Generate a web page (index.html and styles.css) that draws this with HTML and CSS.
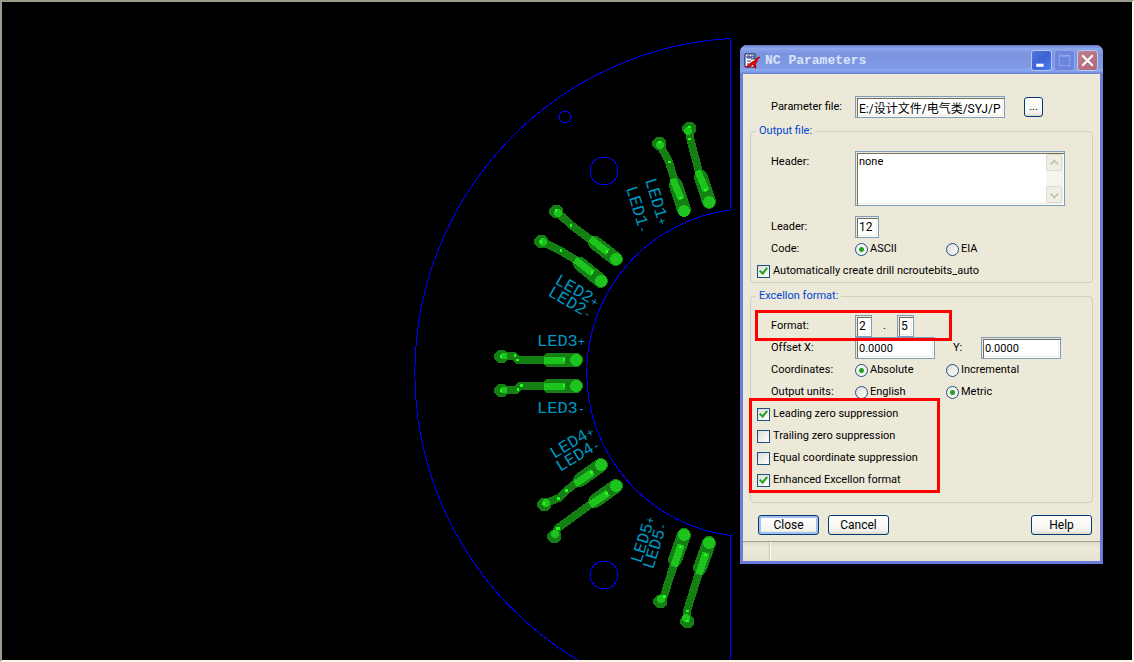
FILE: index.html
```
<!DOCTYPE html>
<html lang="en">
<head>
    <meta charset="UTF-8">
    <meta name="viewport" content="width=device-width, initial-scale=1.0">
    <title>NC Parameters</title>
    <link rel="stylesheet" href="styles.css">
</head>
<body>
    <main class="workspace">
        <!-- Board drawing -->
        <svg class="board" role="img" aria-label="LED ring board">
            <g class="outline">
                <path d="M728.5 208V36.5A334.8 334.8 0 0 0 728.5 705V533.5A164 164 0 0 1 728.5 208"/>
                <circle cx="563" cy="115" r="6"/>
                <circle cx="602" cy="169" r="14"/>
                <circle cx="602" cy="573" r="14"/>
            </g>
            <g transform="translate(-2 -2)">
                <g class="track">
                    <path d="M659 143L669 162L677 188"/>
                    <path d="M689 128L690 138L700 176"/>
                    <path d="M556 211L571 225L595 243"/>
                    <path d="M541 241L561 251L579 262"/>
                    <path d="M501 356H514L518 360H548"/>
                    <path d="M501 390H516L520 386H548"/>
                    <path d="M544 504L559 498L567 490L580 480"/>
                    <path d="M554 536L558 528L595 501"/>
                    <path d="M660 601L664 596L675 561"/>
                    <path d="M687 621L687 611L700 569"/>
                </g>
                <g class="pad">
                    <path d="M676 185L684 210"/>
                    <path d="M701 177L709 202"/>
                    <path d="M595 243L616 259"/>
                    <path d="M580 264L601 281"/>
                    <path d="M549 360H576"/>
                    <path d="M549 386H576"/>
                    <path d="M580 480L601 465"/>
                    <path d="M595 501L616 486"/>
                    <path d="M675 560L684 535"/>
                    <path d="M700 568L709 543"/>
                </g>
                <g class="via">
                    <path d="M656 137h6l4 4v5l-4 4h-6l-4-4v-5z"/>
                    <path d="M686 122h6l4 4v5l-4 4h-6l-4-4v-5z"/>
                    <path d="M553 205h6l4 4v5l-4 4h-6l-4-4v-5z"/>
                    <path d="M538 235h6l4 4v5l-4 4h-6l-4-4v-5z"/>
                    <path d="M498 350h6l4 4v5l-4 4h-6l-4-4v-5z"/>
                    <path d="M498 384h6l4 4v5l-4 4h-6l-4-4v-5z"/>
                    <path d="M541 498h6l4 4v5l-4 4h-6l-4-4v-5z"/>
                    <path d="M551 530h6l4 4v5l-4 4h-6l-4-4v-5z"/>
                    <path d="M657 595h6l4 4v5l-4 4h-6l-4-4v-5z"/>
                    <path d="M684 615h6l4 4v5l-4 4h-6l-4-4v-5z"/>
                </g>
                <g class="slot">
                    <path d="M674 182L680 196"/>
                    <path d="M699 174L705 188"/>
                    <path d="M593 241L605 250"/>
                    <path d="M578 262L590 271"/>
                    <path d="M547 360H561"/>
                    <path d="M547 386H561"/>
                    <path d="M578 482L590 474"/>
                    <path d="M593 503L605 495"/>
                    <path d="M675 563L680 548"/>
                    <path d="M700 571L705 556"/>
                </g>
                <g class="hole">
                    <circle cx="684" cy="211" r="6"/>
                    <circle cx="709" cy="202" r="6"/>
                    <circle cx="616" cy="259" r="6"/>
                    <circle cx="601" cy="281" r="6"/>
                    <circle cx="576" cy="360" r="6"/>
                    <circle cx="576" cy="386" r="6"/>
                    <circle cx="601" cy="465" r="6"/>
                    <circle cx="616" cy="486" r="6"/>
                    <circle cx="684" cy="535" r="6"/>
                    <circle cx="709" cy="543" r="6"/>
                    <circle cx="660" cy="145" r="4"/>
                    <circle cx="688" cy="131" r="4"/>
                    <circle cx="558" cy="213" r="4"/>
                    <circle cx="543" cy="242" r="4"/>
                    <path d="M501 353h6v6h-6zM501 387h6v6h-6z"/>
                    <circle cx="546" cy="503" r="4"/>
                    <circle cx="555" cy="534" r="4"/>
                    <circle cx="661" cy="599" r="4"/>
                    <circle cx="686" cy="618" r="4"/>
                </g>
                <g class="node">
                    <path d="M658 141h3v2h-3zM668 161h3v2h-3zM679 197h3v2h-3zM688 126h3v2h-3zM688 138h3v2h-3zM704 189h3v2h-3z"/>
                    <path d="M555 209h2v3h-2zM570 224h2v3h-2zM606 250h2v3h-2zM540 240h2v3h-2zM560 249h2v3h-2zM591 271h2v3h-2z"/>
                    <path d="M500 355h2v3h-2zM514 354h2v3h-2zM516 359h3v2h-3zM563 358h2v3h-2zM500 389h2v3h-2zM517 388h2v3h-2zM520 384h3v3h-3zM563 384h2v3h-2z"/>
                    <path d="M557 497h3v3h-3zM565 489h3v3h-3zM590 471h3v3h-3zM556 527h4v3h-4zM605 492h3v3h-3zM543 502h2v3h-2z"/>
                    <path d="M663 595h3v3h-3zM679 546h3v2h-3zM686 610h3v2h-3zM704 554h3v2h-3zM686 620h3v2h-3z"/>
                </g>
                <g class="silk">
                    <text transform="translate(645 180) rotate(73)">LED1<tspan class="sign">+</tspan></text>
                    <text transform="translate(626 188) rotate(73)">LED1<tspan class="sign">-</tspan></text>
                    <text transform="translate(554 283) rotate(30)">LED2<tspan class="sign">+</tspan></text>
                    <text transform="translate(547 295) rotate(30)">LED2<tspan class="sign">-</tspan></text>
                    <text x="537" y="346">LED3<tspan class="sign">+</tspan></text>
                    <text x="537" y="413">LED3<tspan class="sign">-</tspan></text>
                    <text transform="translate(554 459) rotate(-31)">LED4<tspan class="sign">+</tspan></text>
                    <text transform="translate(560 472) rotate(-31)">LED4<tspan class="sign">-</tspan></text>
                    <text transform="translate(641 564) rotate(-73)">LED5<tspan class="sign">+</tspan></text>
                    <text transform="translate(653 570) rotate(-73)">LED5<tspan class="sign">-</tspan></text>
                </g>
            </g>
        </svg>

        <!-- Dialog window -->
        <section class="dialog" aria-labelledby="dialogTitle">
            <header class="titlebar">
                <svg class="app-icon" viewBox="0 0 16 16" aria-hidden="true">
                    <path d="M1 1h10v13H1z" fill="#fff" stroke="#101850"/>
                    <path d="M3 3h3v2H3zM7 3h3v3H7zM3 8h4M3 11h3" fill="#aab8e8" stroke="#303a80"/>
                    <path d="M16 4l-3 1-2 3-3 1-6 5h3l3-2 1-1 2 4h1l-1-4 2-2V7z" fill="#e01010" stroke="#c00000"/>
                </svg>
                <h1 id="dialogTitle">NC Parameters</h1>
                <button type="button" class="caption" aria-label="Minimize">
                    <svg viewBox="0 0 18 18"><path d="M4 12h7v3H4z" fill="#fff"/></svg>
                </button>
                <button type="button" class="caption caption-max" aria-label="Maximize" disabled>
                    <svg viewBox="0 0 18 18"><path d="M4 4h10v10H4zM4 5h10" fill="none" stroke="#8fa4ea"/></svg>
                </button>
                <button type="button" class="caption caption-close" aria-label="Close window">
                    <svg viewBox="0 0 18 18"><path d="M4 4l10 10M14 4L4 14" stroke="#fff" stroke-width="2"/></svg>
                </button>
            </header>

            <form class="content">
                <div class="row param-row">
                    <label for="paramFile">Parameter file:</label>
                    <input type="text" id="paramFile" class="path" value="E:/设计文件/电气类/SYJ/PCB">
                    <button type="button" class="browse">...</button>
                </div>

                <fieldset>
                    <legend>Output file:</legend>
                    <div class="row header-row">
                        <label for="header">Header:</label>
                        <div class="memo">
                            <textarea id="header">none</textarea>
                            <div class="scroll">
                                <button type="button" aria-label="Scroll up" disabled>
                                    <svg viewBox="0 0 15 15"><path d="M4 9l4-4 4 4"/></svg>
                                </button>
                                <button type="button" aria-label="Scroll down" disabled>
                                    <svg viewBox="0 0 15 15"><path d="M4 6l4 4 4-4"/></svg>
                                </button>
                            </div>
                        </div>
                    </div>
                    <div class="row">
                        <label for="leader">Leader:</label>
                        <input type="text" id="leader" class="short" value="12">
                    </div>
                    <div class="row">
                        <span>Code:</span>
                        <label class="option"><input type="radio" name="code" checked>ASCII</label>
                        <label class="option"><input type="radio" name="code">EIA</label>
                    </div>
                    <label class="option check-row"><input type="checkbox" checked>Automatically create drill ncroutebits_auto</label>
                </fieldset>

                <fieldset class="excellon">
                    <legend>Excellon format:</legend>
                    <div class="row marked marked-format">
                        <label for="intDigits">Format:</label>
                        <div class="digits">
                            <input type="text" id="intDigits" value="2">
                            <span>.</span>
                            <input type="text" value="5" aria-label="Decimal digits">
                        </div>
                    </div>
                    <div class="row">
                        <label for="offsetX">Offset X:</label>
                        <input type="text" id="offsetX" class="number" value="0.0000">
                        <div class="offset-y">
                            <label for="offsetY">Y:</label>
                            <input type="text" id="offsetY" class="number" value="0.0000">
                        </div>
                    </div>
                    <div class="row">
                        <span>Coordinates:</span>
                        <label class="option"><input type="radio" name="coords" checked>Absolute</label>
                        <label class="option"><input type="radio" name="coords">Incremental</label>
                    </div>
                    <div class="row">
                        <span>Output units:</span>
                        <label class="option"><input type="radio" name="units">English</label>
                        <label class="option"><input type="radio" name="units" checked>Metric</label>
                    </div>
                    <div class="marked marked-checks">
                        <label class="option check-row"><input type="checkbox" checked>Leading zero suppression</label>
                        <label class="option check-row"><input type="checkbox">Trailing zero suppression</label>
                        <label class="option check-row"><input type="checkbox">Equal coordinate suppression</label>
                        <label class="option check-row"><input type="checkbox" checked>Enhanced Excellon format</label>
                    </div>
                </fieldset>

                <div class="buttons">
                    <button type="button" class="button default">Close</button>
                    <button type="button" class="button">Cancel</button>
                    <button type="button" class="button help">Help</button>
                </div>
            </form>
            <footer class="statusbar"></footer>
        </section>
    </main>
</body>
</html>
```
FILE: styles.css
```
*, *::before, *::after {
    box-sizing: border-box;
}
body {
    margin: 0;
    font-family: Roboto, "Noto Sans CJK SC", sans-serif;
    font-size: 11px;
    line-height: 14px;
    color: #000;
    background-color: #000;
}
.workspace {
    position: relative;
    min-height: 100vh;
    border: 2px solid #fff8e8;
    border-top-color: #9c9a8a;
    border-left-color: #9c9a8a;
    overflow: hidden;
}

/* board */
.board {
    position: absolute;
    inset: 0;
    width: 100%;
    height: 100%;
    shape-rendering: crispEdges;
}
.outline {
    fill: none;
    stroke: #0000ff;
    stroke-width: 1;
}
.track, .pad, .slot {
    fill: none;
    stroke: #148014;
    stroke-linejoin: round;
    stroke-linecap: round;
}
.track {
    stroke-width: 8;
}
.pad {
    stroke-width: 14;
}
.via {
    fill: #148014;
}
.slot {
    stroke: #1ec41e;
    stroke-width: 7;
    stroke-linecap: square;
}
.hole {
    fill: #1ec41e;
}
.node {
    fill: #20ff20;
}
.silk {
    fill: #0098c0;
    font-family: "Liberation Mono", monospace;
    font-size: 17px;
}
.silk .sign {
    font-size: 12px;
}

/* dialog */
.dialog {
    position: absolute;
    top: 43px;
    left: 738px;
    width: 363px;
    border: 3px solid #6c7cd8;
    border-top: 0;
    border-radius: 7px 7px 0 0;
    background-color: #ece9d8;
}
.titlebar {
    display: flex;
    align-items: center;
    gap: 2px;
    height: 29px;
    margin: 0 -3px;
    padding: 2px 5px 0 4px;
    border-radius: 7px 7px 0 0;
    background: linear-gradient(#6277c8, #8ea6ec 12%, #7b93df 30%, #809ae6 75%, #86a8f0 88%, #7080cc);
}
.titlebar h1 {
    flex: 1;
    margin: 0;
    padding-left: 3px;
    font-family: "Liberation Mono", monospace;
    font-size: 13px;
    line-height: 16px;
    font-weight: bold;
    color: #d8e4f8;
}
.app-icon {
    width: 16px;
    height: 16px;
}
.caption {
    width: 21px;
    height: 21px;
    padding: 0;
    border: 1px solid #b8c8f4;
    border-radius: 3px;
    background: linear-gradient(135deg, #4f78e0, #3c62d4 50%, #4880f0);
}
.caption svg {
    display: block;
    width: 100%;
}
.caption-max {
    border-color: #8fa4ea;
    background: #6c86de;
}
.caption-close {
    background: linear-gradient(135deg, #c08090, #b06878);
}
.content {
    padding: 22px 7px 6px;
}
.row {
    display: grid;
    grid-template-columns: 84px 91px 1fr;
    align-items: center;
    height: 22px;
    padding-left: 20px;
}
.param-row {
    grid-template-columns: 84px 150px 1fr;
    margin: 0 0 6px 1px;
}
fieldset {
    min-width: 0;
    margin: 0 0 6px;
    padding: 13px 0 0;
    border: 1px solid #d0d0bf;
    border-radius: 4px;
}
legend {
    margin-left: 5px;
    padding: 0 3px;
    color: #0046d5;
}
.excellon {
    margin-bottom: 12px;
    padding: 12px 0 11px;
}
.header-row {
    grid-template-columns: 84px 210px;
    align-items: start;
    height: 55px;
    margin-bottom: 10px;
}
.header-row label {
    padding-top: 4px;
}

/* controls */
input, textarea, button {
    font: inherit;
    color: inherit;
}
input[type="text"], .memo {
    border: 1px solid #7f9db9;
    background-color: #fff;
    box-shadow: inset 1px 1px #ece9d8, inset 2px 2px #716f64, inset -1px -1px #fff, inset -2px -2px #f1efe2;
}
input[type="text"] {
    width: 100%;
    height: 22px;
    padding: 0 3px;
    border-radius: 0;
    font-size: 12px;
}
input.short {
    width: 24px;
}
input.number {
    width: 80px;
    font-size: 11px;
}
.digits {
    display: grid;
    grid-template-columns: 17px 25px 17px;
    align-items: center;
    text-align: center;
}
.offset-y {
    display: grid;
    grid-template-columns: 28px 80px;
    align-items: center;
    padding-left: 7px;
}
.memo {
    display: flex;
    height: 55px;
    padding: 2px;
}
.memo textarea {
    flex: 1;
    min-width: 0;
    padding: 0 1px;
    border: 0;
    outline: 0;
    resize: none;
    overflow: hidden;
    background: transparent;
    line-height: 16px;
}
.scroll {
    display: flex;
    flex-direction: column;
    justify-content: space-between;
    width: 16px;
    background-color: #f6f5f0;
}
.scroll button {
    width: 16px;
    height: 17px;
    padding: 0;
    border: 1px solid #dddac8;
    border-radius: 2px;
    background-color: #f0efe6;
}
.scroll svg {
    display: block;
    fill: none;
    stroke: #c4c2b4;
    stroke-width: 2;
}
.option {
    display: flex;
    align-items: center;
    gap: 2px;
    white-space: nowrap;
}
.check-row {
    gap: 3px;
    height: 22px;
    padding-left: 6px;
}
input[type="radio"], input[type="checkbox"] {
    appearance: none;
    flex: none;
    width: 13px;
    height: 13px;
    margin: 0;
    border: 1px solid #1c5180;
    background: linear-gradient(135deg, #dcdcd7, #fff);
}
input[type="radio"] {
    border-radius: 50%;
}
input[type="radio"]:checked {
    background: radial-gradient(circle, #21a121 2px, #f4f4f2 3px);
}
input[type="checkbox"]:checked::before {
    content: "";
    display: block;
    width: 5px;
    height: 8px;
    margin-left: 3px;
    border: solid #21a121;
    border-width: 0 2px 2px 0;
    transform: rotate(40deg);
}
.button, .browse {
    padding: 0;
    border: 1px solid #003c74;
    border-radius: 3px;
    background: linear-gradient(#fff, #f4f3ee 80%, #dcd8cc);
}
.browse {
    width: 19px;
    height: 20px;
    margin-left: 19px;
}
.buttons {
    display: flex;
    gap: 9px;
    padding: 0 1px 0 8px;
}
.button {
    width: 61px;
    height: 20px;
    font-size: 12px;
}
.default {
    box-shadow: inset 0 0 0 2px #a4c0f0;
}
.help {
    margin-left: auto;
}
.statusbar {
    height: 20px;
    border-top: 1px solid #a09e90;
    background: linear-gradient(90deg, transparent 26px, #c8c4b0 26px, #c8c4b0 27px, #fff 27px, #fff 28px, transparent 28px), linear-gradient(#dedbc8, #ece9d8 30%, #e6e3d0);
}

/* red callouts */
.marked {
    position: relative;
}
.marked::after {
    content: "";
    position: absolute;
    border: 3px solid #ff0000;
    pointer-events: none;
}
.marked-format::after {
    top: -5px;
    bottom: -4px;
    left: 4px;
    width: 197px;
}
.marked-checks::after {
    top: -5px;
    bottom: -2px;
    left: -2px;
    width: 191px;
}
```
